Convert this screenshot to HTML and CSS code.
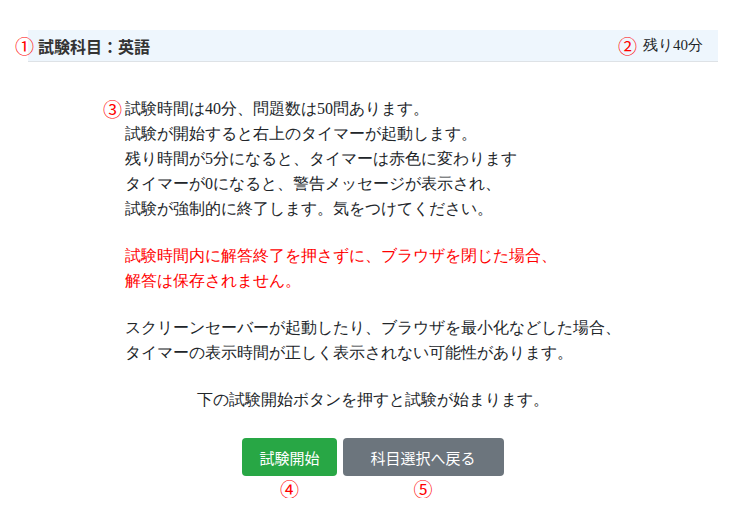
FILE: index.html
```html
<!DOCTYPE html>
<html lang="ja">
<head>
    <meta charset="UTF-8">
    <meta name="viewport" content="width=device-width, initial-scale=1.0">
    <title>試験開始前の注意</title>
    <link rel="stylesheet" href="styles.css">
</head>
<body>
    <div class="page">
        <header class="exam-header">
            <span class="mark mark-1">①</span>
            <div class="subject">試験科目：英語</div>
            <div class="timer"><span class="mark-inline">②</span>残り40分</div>
        </header>

        <main class="notice">
            <div class="notice-body">
                <span class="mark mark-3">③</span>
                <p>試験時間は40分、問題数は50問あります。<br>
                試験が開始すると右上のタイマーが起動します。<br>
                残り時間が5分になると、タイマーは赤色に変わります<br>
                タイマーが0になると、警告メッセージが表示され、<br>
                試験が強制的に終了します。気をつけてください。</p>

                <p class="warn">試験時間内に解答終了を押さずに、ブラウザを閉じた場合、<br>
                解答は保存されません。</p>

                <p>スクリーンセーバーが起動したり、ブラウザを最小化などした場合、<br>
                タイマーの表示時間が正しく表示されない可能性があります。</p>
            </div>

            <p class="start-hint">下の試験開始ボタンを押すと試験が始まります。</p>

            <div class="actions">
                <div class="action">
                    <button class="btn btn-start">試験開始</button>
                    <span class="mark-below">④</span>
                </div>
                <div class="action">
                    <button class="btn btn-back">科目選択へ戻る</button>
                    <span class="mark-below">⑤</span>
                </div>
            </div>
        </main>
    </div>
</body>
</html>
```

FILE: styles.css
```css
:root {
    --band-bg: #eef6fd;
    --band-line: #dee2e6;
    --text: #212529;
    --mark: #ff0000;
    --green: #28a745;
    --gray: #6c757d;
}

* {
    box-sizing: border-box;
    margin: 0;
    padding: 0;
}

body {
    font-family: "Liberation Serif", serif;
    color: var(--text);
    background: #fff;
}

.page {
    position: relative;
    padding: 30px 23px 0 28px;
}

.exam-header {
    position: relative;
    display: flex;
    justify-content: space-between;
    align-items: center;
    height: 32px;
    padding: 0 15px 0 10px;
    background: var(--band-bg);
    border-bottom: 1px solid var(--band-line);
    font-size: 15px;
}

.subject {
    font-family: "Noto Sans CJK JP", sans-serif;
    font-size: 16px;
    font-weight: 600;
    color: #333;
}

.timer {
    display: flex;
    align-items: center;
    gap: 6px;
}

.mark,
.mark-inline,
.mark-below {
    color: var(--mark);
    font-family: "Noto Sans CJK JP", sans-serif;
    font-size: 19px;
    line-height: 1;
}

.mark {
    position: absolute;
}

.mark-1 {
    left: -13px;
    top: 6px;
}

.notice {
    display: flex;
    flex-direction: column;
    align-items: center;
    padding-top: 34px;
    font-size: 16px;
    line-height: 25px;
}

.notice-body {
    position: relative;
}

.mark-3 {
    left: -22px;
    top: 3px;
}

.notice-body p {
    margin-bottom: 22px;
}

.warn {
    color: var(--mark);
}

.actions {
    display: flex;
    gap: 6px;
    margin-top: 26px;
}

.action {
    display: flex;
    flex-direction: column;
    align-items: center;
    gap: 3px;
}

.btn {
    height: 38px;
    padding: 0 17px;
    border: none;
    border-radius: 4px;
    color: #fff;
    font-family: "Noto Sans CJK JP", sans-serif;
    font-size: 15px;
    cursor: pointer;
}

.btn-start {
    background: var(--green);
}

.btn-back {
    background: var(--gray);
    padding: 0 28px;
}
```
